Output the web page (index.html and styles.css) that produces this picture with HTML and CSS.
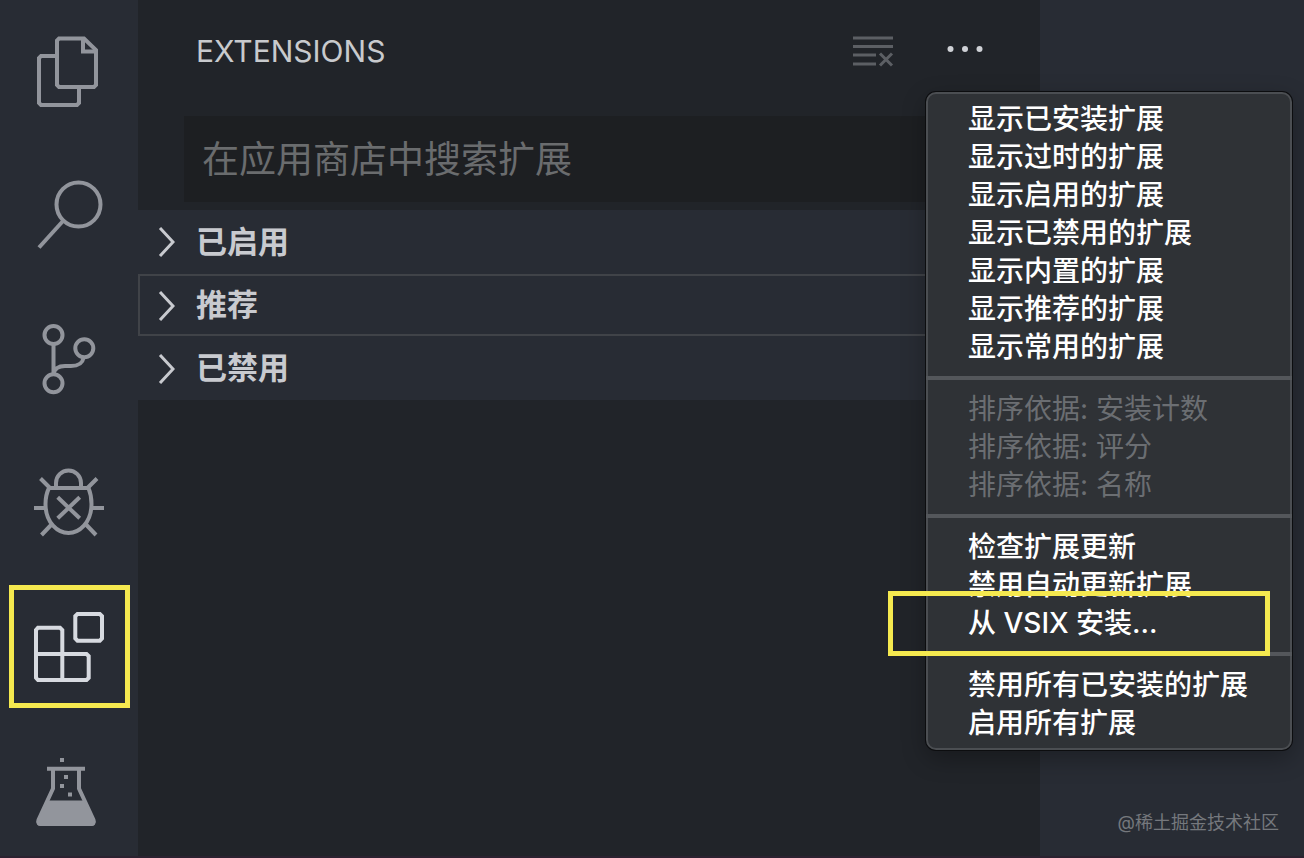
FILE: index.html
```
<!DOCTYPE html>
<html lang="zh-CN">

<head>
    <meta charset="UTF-8">
    <meta name="viewport" content="width=device-width, initial-scale=1.0">
    <title>Extensions</title>
    <link rel="stylesheet" href="styles.css">
</head>

<body>
    <div class="app">
        <nav class="activity">
            <button type="button" aria-label="Explorer">
                <svg viewBox="0 0 72 72">
                    <path d="M24 20H8l-2 2v45l2 2h36l2-2V51" />
                    <path d="M26 2.5h25L63 14v35l-2 2H26l-2-2V4.5z" />
                    <path d="M50 3v12.5h12" />
                </svg>
            </button>
            <button type="button" aria-label="Search">
                <svg viewBox="0 0 72 72">
                    <circle cx="45.5" cy="24.5" r="22" />
                    <path d="M30 41L6 67.5" />
                </svg>
            </button>
            <button type="button" aria-label="Source control">
                <svg viewBox="0 0 72 72">
                    <circle cx="20.5" cy="11" r="9" />
                    <circle cx="20.5" cy="59.3" r="9" />
                    <circle cx="51.3" cy="24.3" r="9" />
                    <path d="M20.5 20v30Q22 42 32 42h6Q49 42 50.5 34" />
                </svg>
            </button>
            <button type="button" aria-label="Debug">
                <svg viewBox="0 0 72 72">
                    <path d="M16 20C13 26 12.5 32 12.5 36C12.5 55 25 65 35.5 65S58.5 55 58.5 36C58.5 32 58 26 55.5 20z" />
                    <path d="M23 20v-5a12.5 12.5 0 0 1 25 0v5" />
                    <path d="M7.5 10.5l9 9M64 10.5l-9 9M1 40h12M58 40h13M8.5 67l10.5-11M63 67L52.5 56" />
                    <path d="M24.7 29.3l22 21M46.7 29.3l-22 21" />
                </svg>
            </button>
            <button type="button" class="active" aria-label="Extensions">
                <svg viewBox="0 0 72 72">
                    <path d="M5 15.7h22l2.3 2.3v24H53.5l2.2 2.2v21.6L53.5 68H5l-2-2.2V18z" />
                    <path d="M3 42h26.3v26" />
                    <path d="M44.5 2h22.3L69 4.2v22.3l-2.2 2.2H44.5l-2.2-2.2V4.2z" />
                </svg>
            </button>
            <button type="button" aria-label="Test">
                <svg viewBox="0 0 72 72">
                    <path d="M14 12.7h38M20 13v19.5L5.5 64q-1 4 3 4h49q4 0 3-4L46 32.5V13" />
                    <path class="solid" d="M15 44.5h36L62.5 65q.5 5-4 5h-51q-4.5 0-4-5z" />
                    <path class="solid" d="M27 2h4v4h-4zM31 19h4v4h-4zM27 28h4v4h-4zM35 36.5h4v4h-4z" />
                </svg>
            </button>
        </nav>

        <main class="sidebar">
            <header class="title-bar">
                <h1>EXTENSIONS</h1>
                <button type="button" class="clear" aria-label="Clear" disabled>
                    <svg viewBox="0 0 42 32">
                        <path d="M1 3h40M1 11.5h40M1 20h23M1 29h23M28 18.5l12 12M40 18.5l-12 12" />
                    </svg>
                </button>
                <button type="button" class="more" aria-label="More">
                    <svg viewBox="0 0 42 32">
                        <circle cx="6.5" cy="14" r="3" />
                        <circle cx="21" cy="14" r="3" />
                        <circle cx="35.5" cy="14" r="3" />
                    </svg>
                </button>
            </header>
            <div class="search">
                <input type="text" placeholder="在应用商店中搜索扩展" aria-label="在应用商店中搜索扩展">
            </div>
            <div class="sections">
                <button type="button">
                    <svg viewBox="0 0 18 32"><path d="M3 2l13 14L3 30" /></svg>已启用
                </button>
                <button type="button" class="focused">
                    <svg viewBox="0 0 18 32"><path d="M3 3l13 14L3 31" /></svg>推荐
                </button>
                <button type="button">
                    <svg viewBox="0 0 18 32"><path d="M3 3l13 14L3 31" /></svg>已禁用
                </button>
            </div>
        </main>

        <div class="editor">
            <p class="watermark">@稀土掘金技术社区</p>
        </div>

        <div class="menu">
            <ul>
                <li><button type="button">显示已安装扩展</button></li>
                <li><button type="button">显示过时的扩展</button></li>
                <li><button type="button">显示启用的扩展</button></li>
                <li><button type="button">显示已禁用的扩展</button></li>
                <li><button type="button">显示内置的扩展</button></li>
                <li><button type="button">显示推荐的扩展</button></li>
                <li><button type="button">显示常用的扩展</button></li>
            </ul>
            <ul>
                <li><button type="button" disabled>排序依据: 安装计数</button></li>
                <li><button type="button" disabled>排序依据: 评分</button></li>
                <li><button type="button" disabled>排序依据: 名称</button></li>
            </ul>
            <ul>
                <li><button type="button">检查扩展更新</button></li>
                <li><button type="button">禁用自动更新扩展</button></li>
                <li class="marked"><button type="button">从 VSIX 安装...</button></li>
            </ul>
            <ul>
                <li><button type="button">禁用所有已安装的扩展</button></li>
                <li><button type="button">启用所有扩展</button></li>
            </ul>
        </div>
    </div>
</body>

</html>
```
FILE: styles.css
```
* {
    margin: 0;
    padding: 0;
    box-sizing: border-box;
}

body {
    background: #282c34;
    font-family: Inter, "Noto Sans CJK SC", sans-serif;
    color: #cfd1d6;
}

ul {
    list-style: none;
}

button {
    border: 0;
    background: none;
    font: inherit;
    color: inherit;
    text-align: left;
}

svg {
    display: block;
    fill: none;
    stroke: currentColor;
    stroke-width: 4;
}

.app {
    display: grid;
    grid-template-columns: 138px 1fr 264px;
    height: 100vh;
    position: relative;
    overflow: hidden;
    border-bottom: 2px solid #2b2230;
}

/* activity bar */
.activity {
    overflow: hidden;
    color: #92959c;
}

.activity button {
    display: flex;
    align-items: center;
    justify-content: center;
    width: 100%;
    height: 144px;
    position: relative;
}

.activity svg {
    width: 72px;
    height: 72px;
}

.activity .solid {
    fill: currentColor;
    stroke: none;
}

.activity .active {
    color: #d7dae0;
}

.activity .active::after {
    content: "";
    position: absolute;
    top: 9px;
    right: 8px;
    bottom: 12px;
    left: 9px;
    border: 5px solid #f5e94f;
}

/* side bar */
.sidebar {
    background: #212429;
}

.title-bar {
    display: flex;
    align-items: center;
    gap: 50px;
    height: 102px;
    padding: 0 54px 0 58px;
}

.title-bar h1 {
    flex: 1;
    font-size: 30px;
    font-weight: 400;
    color: #c8cacd;
}

.title-bar svg {
    width: 42px;
    height: 32px;
    stroke-width: 3;
}

.title-bar .clear {
    color: #5c5f64;
}

.title-bar .more svg {
    fill: currentColor;
    stroke: none;
}

.search {
    padding: 14px 46px 8px;
}

.search input {
    display: block;
    width: 100%;
    height: 86px;
    padding: 0 18px;
    border: 0;
    background: #1d1f22;
    font-family: inherit;
    font-size: 37px;
    color: #cfd1d6;
}

.search input::placeholder {
    color: #6a6c6e;
}

.sections button {
    display: flex;
    align-items: center;
    gap: 21px;
    width: 100%;
    height: 64px;
    padding-left: 19px;
    background: #282c34;
    font-size: 31px;
    font-weight: 700;
    line-height: 40px;
    color: #c8cacf;
}

.sections svg {
    width: 18px;
    height: 32px;
    stroke-width: 3;
}

.sections .focused {
    height: 62px;
    padding-left: 17px;
    border: 2px solid #404348;
}

/* editor */
.editor {
    display: flex;
    align-items: flex-end;
    justify-content: flex-end;
    padding: 20px 25px;
}

.watermark {
    font-size: 18px;
    line-height: 26px;
    color: #75787d;
}

/* context menu */
.menu {
    position: absolute;
    top: 92px;
    right: 12px;
    width: 366px;
    padding: 6px 0;
    border: 2px solid #4b4e52;
    border-radius: 10px;
    background: #2f3236;
    box-shadow: 0 0 0 1px #0c0d0f, 0 8px 24px rgba(0, 0, 0, .3);
    font-size: 28px;
    font-weight: 500;
    line-height: 38px;
    color: #fff;
}

.menu ul + ul {
    margin: 10px -2px 0;
    padding: 10px 2px 0;
    border-top: 4px solid #54575b;
}

.menu button {
    display: block;
    width: 100%;
    height: 38px;
    padding-left: 40px;
    white-space: nowrap;
}

.menu button:disabled {
    font-weight: 400;
    color: #6b6e72;
}

.menu .marked {
    position: relative;
}

.menu .marked::after {
    content: "";
    position: absolute;
    top: -13px;
    right: 20px;
    bottom: -14px;
    left: -40px;
    border: 5px solid #f5e94f;
}
```
